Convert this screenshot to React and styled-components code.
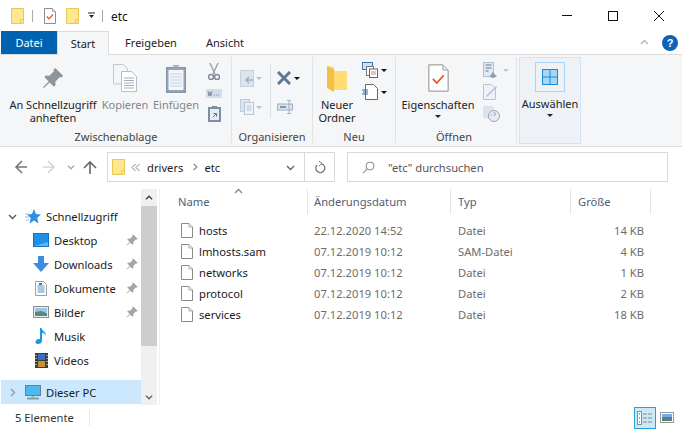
import React from "react";
import styled, { createGlobalStyle } from "styled-components";

const Global = createGlobalStyle`
  html, body { margin: 0; padding: 0; background: #fff; }
  body { font-family: "Noto Sans", "Open Sans", sans-serif; font-size: 11.2px; color: #1a1a1a; }
  * { box-sizing: border-box; }
`;
const Window = styled.div`width: 682px; height: 430px; overflow: hidden; display: flex; flex-direction: column; background: #fff;`;
const TitleBar = styled.div`height: 31px; display: flex; align-items: center; padding-left: 11px; flex: none;`;
const TitleText = styled.span`font-size: 12px; margin-left: 1px; color: #111; position: relative; top: 1px;`;
const QuickSep = styled.span`width: 1px; height: 12px; background: #a8a8a8; margin: 0 ${p => p.$mr || 10}px 0 ${p => p.$ml || 10}px;`;
const WinButtons = styled.div`margin-left: auto; display: flex; height: 31px;`;
const WinButton = styled.div`width: 46px; height: 31px; display: flex; align-items: center; justify-content: center;`;
const QuickIcon = styled.span`display: flex; margin-right: ${p => p.$mr || 0}px;`;
const CaretGlyph = styled.svg`flex: none;`;

const TabsRow = styled.div`height: 24px; display: flex; align-items: stretch; padding-left: 1px; flex: none; position: relative;`;
const FileTab = styled.div`width: 56px; height: 23px; background: #0063b1; color: #fff; display: flex; align-items: center; justify-content: center; font-size: 11px;`;
const Tab = styled.div`width: ${p => p.$w}px; height: ${p => p.$active ? 24 : 23}px; display: flex; align-items: center; justify-content: center; font-size: 11px; color: #222;
  background: ${p => p.$active ? "#f5f6f7" : "transparent"};
  border: ${p => p.$active ? "1px solid #dadbdc" : "none"}; border-bottom: none; position: relative; z-index: 1;`;
const RibbonRight = styled.div`margin-left: auto; display: flex; align-items: center; gap: 13px; padding-right: 4px; height: 23px;`;

const Ribbon = styled.div`height: 93px; flex: none; background: #f5f6f7; border-top: 1px solid #dadbdc; border-bottom: 1px solid #dadbdc; display: flex; padding: 2px 0 1px 1px; margin-top: -1px;`;
const Group = styled.div`width: ${p => p.$w}px; border-right: 1px solid #e1e3e6; display: flex; flex-direction: column; margin-bottom: 2px; flex: none;`;
const GroupBody = styled.div`flex: 1; display: flex; align-items: flex-start; padding-left: ${p => p.$pl || 0}px; min-height: 0;`;
const GroupLabel = styled.div`height: 17px; text-align: center; font-size: 11px; line-height: 21px; color: #444; padding-right: ${p => p.$pr || 0}px;`;
const BigButton = styled.div`width: ${p => p.$w}px; display: flex; flex-direction: column; align-items: center; flex: none; padding-top: 1px; color: ${p => p.$disabled ? "#80868c" : "#222"}; font-size: 11px; line-height: 13px; text-align: center;`;
const BigIcon = styled.div`height: 40px; display: flex; align-items: center; justify-content: center; flex: none;`;
const Caret = styled.span`display: block; width: 0; height: 0; border-left: 3px solid transparent; border-right: 3px solid transparent; border-top: 3px solid ${p => p.$c || "#222"}; margin-top: ${p => p.$mt ?? 0}px; margin-left: ${p => p.$ml ?? 0}px;`;
const SmallCol = styled.div`width: ${p => p.$w}px; display: flex; flex-direction: column; gap: ${p => p.$gap ?? 4}px; padding-top: ${p => p.$pt ?? 3}px; padding-left: ${p => p.$pl ?? 0}px; align-items: ${p => p.$align || "center"}; flex: none;`;
const SmallRow = styled.div`display: flex; align-items: center; height: ${p => p.$h || 20}px;`;
const VSep = styled.div`width: 1px; height: 54px; background: #dfe1e4; margin: 7px 6px 0 6px; flex: none;`;
const SelectPanel = styled.div`width: 62px; height: 87px; margin-left: 2px; background: #eef2f7; border: 1px solid #cde4f9; display: flex; flex-direction: column; align-items: center; padding-top: 4px; font-size: 11px; line-height: 13px; color: #222; flex: none;`;
const SelectIconBox = styled.div`width: 30px; height: 30px; border: 1px solid #a9d4f8; display: flex; align-items: center; justify-content: center; margin-bottom: 5px;`;

const NavBar = styled.div`height: 42px; flex: none; display: flex; align-items: flex-start; padding: 5px 14px 0 0; position: relative;`;
const NavIcons = styled.div`width: 107px; height: 30px; display: flex; align-items: center; padding-left: 13px; flex: none;`;
const NavGap = styled.span`width: ${p => p.$w}px; flex: none;`;
const AddressBox = styled.div`width: 228px; height: 30px; border: 1px solid #d9d9d9; display: flex; align-items: center; flex: none;`;
const Crumbs = styled.div`flex: 1; display: flex; align-items: center; padding-left: 4px; font-size: 11.2px; color: #222;`;
const CrumbSep = styled.span`display: flex; margin: ${p => p.$m};`;
const DropChevron = styled.span`display: flex; margin-right: 9px;`;
const RefreshBox = styled.div`width: 30px; height: 28px; border-left: 1px solid #d9d9d9; display: flex; align-items: center; justify-content: center;`;
const SearchBox = styled.div`width: 321px; height: 30px; margin-left: 12px; border: 1px solid #d9d9d9; display: flex; align-items: center; padding-left: 14px; font-size: 11.2px; color: #555;`;
const SearchText = styled.span`margin-left: 13px;`;

const Content = styled.div`flex: 1; display: flex; min-height: 0;`;
const Sidebar = styled.div`width: 141px; padding-top: 15px; padding-left: 1px; flex: none;`;
const NavRow = styled.div`height: 24px; display: flex; align-items: center; font-size: 11.2px; color: #1a1a1a; margin-bottom: ${p => p.$mb || 0}px;
  background: ${p => p.$selected ? "#cce8ff" : "transparent"}; padding-left: ${p => p.$indent}px; width: 140px; position: relative;`;
const NavChevron = styled.span`width: 17px; display: flex; justify-content: center; flex: none; margin-right: 4px;`;
const NavIconBox = styled.span`width: 16px; height: 16px; display: flex; align-items: center; justify-content: center; margin-right: 5px; flex: none;`;
const PinSlot = styled.span`position: absolute; left: 125px; top: 6px; display: flex;`;
const Scrollbar = styled.div`width: 16px; flex: none; background: #f0f0f0; display: flex; flex-direction: column;`;
const ScrollBtn = styled.div`height: 17px; display: flex; align-items: center; justify-content: center; flex: none;`;
const Thumb = styled.div`height: 140px; background: #cdcdcd; flex: none;`;
const ScrollTrack = styled.div`flex: 1;`;
const PaneDivider = styled.div`width: 1px; background: #f0f0f0; margin-left: 2px; flex: none;`;

const FilePane = styled.div`flex: 1; min-width: 0; position: relative;`;
const Head = styled.div`display: grid; grid-template-columns: 148px 143px 120px 80px; height: 25px; color: #4c607a; font-size: 11.2px; margin-bottom: 6px;`;
const HeadCell = styled.div`border-right: 1px solid #e5e5e5; padding-left: ${p => p.$pl}px; display: flex; align-items: center; height: 25px;`;
const SortArrow = styled.span`position: absolute; left: 74px; top: -2px; display: flex;`;
const FileRow = styled.div`display: grid; grid-template-columns: 133px 144px 114px 72px; height: 21px; align-items: center; font-size: 11.2px; color: #6d6d6d; padding-left: 21px;`;
const FileName = styled.div`display: flex; align-items: center; gap: 6px; color: #1a1a1a;`;
const SizeCell = styled.div`text-align: right;`;

const StatusBar = styled.div`height: 25px; flex: none; display: flex; align-items: center; padding-left: 15px; font-size: 11.2px; color: #333; position: relative;`;
const StatusSep = styled.span`width: 1px; height: 16px; background: #e8e8e8; margin-left: 15px;`;
const ViewButtons = styled.div`margin-left: auto; display: flex; align-items: center; padding-right: 8px; gap: 4px;`;
const DetailsBtn = styled.div`width: 22px; height: 22px; border: 1px solid #26a0da; background: #cbe8f6; display: flex; align-items: center; justify-content: center;`;

const Folder = ({ w = 13, h = 16 }) => (
  <svg width={w} height={h} viewBox="0 0 13 16">
    <path d="M.5.5h12v15H.5z" fill="#ffe78f" stroke="#e8c856" />
    <path d="M9.5 15.5v-4h3" fill="#ffe78f" stroke="#e8c856" />
  </svg>
);
const CheckDoc = ({ s = 1 }) => (
  <svg width={12 * s} height={16 * s} viewBox="0 0 12 16">
    <path d="M.5.5h8l3 3v12H.5z" fill="#fff" stroke="#8c8c8c" strokeWidth={1 / s} />
    <path d="M8.5.5v3h3" fill="#e8e8e8" stroke="#a8a8a8" strokeWidth={1 / s} />
    <path d="M2.8 8.5l2.2 2.4 4-4.4" fill="none" stroke="#e8571f" strokeWidth={s > 1 ? 1 : 1.3} />
  </svg>
);
const Pin = ({ s = 12, c = "#98a0a8" }) => (
  <svg width={s} height={s} viewBox="0 0 24 24">
    <path d="M14.5 1L23 9.5l-2 2-1.5-.5-5 5 .3 3.7-1.8 1.8-4.7-4.7L2 23l-1-1 6.2-6.3-4.7-4.7 1.8-1.8 3.700.3 5-5L12.500 3z" fill={c} />
  </svg>
);
const FileIcon = () => (
  <svg width="12" height="15" viewBox="0 0 12 15">
    <path d="M.5.5h7.5l3.500 3.500v10.500H.5z" fill="#fff" stroke="#8a8a8a" />
    <path d="M8 .5V4h3.500" fill="#f2f2f2" stroke="#a8a8a8" />
  </svg>
);
const Chevron = ({ dir = "down", c = "#666", s = 9 }) => {
  const d = { down: "M1 3l3.500 3.500L8 3", up: "M1 6l3.500-3.500L8 6", right: "M3 1l3.500 3.500L3 8", dbl: "M4.500 1L1 4.500 4.500 8M8.500 1L5 4.500 8.500 8" }[dir];
  return <svg width={s} height={s} viewBox="0 0 9 9"><path d={d} fill="none" stroke={c} strokeWidth={dir === "dbl" ? 1 : 1.4} /></svg>;
};
const Arrow = ({ dir, c }) => {
  const d = { left: "M14 8H3M9 2L3 8l6 6", right: "M2 8h11M7 2l6 6-6 6", up: "M8 15V3M2 9l6-6 6 6" };
  return <svg width="16" height="16" viewBox="0 0 16 16"><path d={d[dir]} fill="none" stroke={c} strokeWidth="1.6" /></svg>;
};

const files = [
  ["hosts", "22.12.2020 14:52", "Datei", "14 KB"],
  ["lmhosts.sam", "07.12.2019 10:12", "SAM-Datei", "4 KB"],
  ["networks", "07.12.2019 10:12", "Datei", "1 KB"],
  ["protocol", "07.12.2019 10:12", "Datei", "2 KB"],
  ["services", "07.12.2019 10:12", "Datei", "18 KB"],
];

const icons = {
  desktop: <svg width="16" height="14" viewBox="0 0 16 14"><rect x=".5" y=".5" width="15" height="13" fill="#1e90e8" stroke="#1470c0" /><path d="M1 13h14V9z" fill="#5cb8f5" /></svg>,
  downloads: <svg width="16" height="16" viewBox="0 0 16 16"><path d="M5 0h6v7h5l-8 9-8-9h5z" fill="#3a8ee0" /></svg>,
  docs: <svg width="12" height="15" viewBox="0 0 12 15"><path d="M.5.5h8l3 3v11H.5z" fill="#fff" stroke="#9aa0a6" /><path d="M2.500 5h7M2.500 7h7M2.500 9h7M2.500 11h7" stroke="#5a8fb8" /><path d="M4 3h3" stroke="#2c7fc4" strokeWidth="2" /></svg>,
  pics: <svg width="16" height="12" viewBox="0 0 16 12"><rect x=".5" y=".5" width="15" height="11" fill="#e8eef2" stroke="#8f8f8f" /><rect x="2" y="2" width="12" height="4" fill="#9cc4e8" /><path d="M2 6l6-1 6 2v3H2z" fill="#5a8a78" /></svg>,
  music: <svg width="12" height="16" viewBox="0 0 12 16"><path d="M5 0h1.500c.5 3 4.500 3.500 4.500 7.500-1-2-3-2.500-4-2.500v8c0 2-2 3-4 3s-2.500-1-2.500-2 1-3 3-3c.5 0 1 .1 1.500.3z" fill="#1e96e8" /></svg>,
  videos: <svg width="13" height="15" viewBox="0 0 13 15"><rect width="13" height="15" fill="#3c3c3c" /><rect x="3" y="1" width="7" height="6" fill="#3a6fc0" /><rect x="3" y="8" width="7" height="6" fill="#c89030" /><path d="M1 2v1M1 5v1M1 8v1M1 11v1M12 2v1M12 5v1M12 8v1M12 11v1" stroke="#fff" /></svg>,
  pc: <svg width="16" height="15" viewBox="0 0 16 15"><rect x=".5" y=".5" width="15" height="10" fill="#4db8f0" stroke="#6a7f90" /><path d="M2 13.500h12" stroke="#8a99a5" strokeWidth="2" /><path d="M6.500 11h3v2h-3z" fill="#a8b4bd" /></svg>,
  star: <svg width="16" height="15" viewBox="0 0 16 15"><path d="M9 0l2 5 5 .5-3.800 3.500L13.500 14.500 9 11.500 4.500 14.500 5.800 9 2 5.500l5-.5z" fill="#2f8fe6" /><path d="M0 5h4M0 8h4M1 11h3" stroke="#8cc4f0" /></svg>,
};

const MoveIcon = () => <svg width="14" height="17" viewBox="0 0 14 17"><rect x=".5" y=".5" width="13" height="16" fill="#dbe5f0" stroke="#c6d1de" /><path d="M13 10H6M9 7l-3 3 3 3" fill="none" stroke="#9fb0c4" strokeWidth="1.500" /></svg>;
const CopyIcon = () => <svg width="14" height="16" viewBox="0 0 14 16"><rect x=".5" y=".5" width="9" height="12" fill="#dbe5f0" stroke="#c0ccd9" /><rect x="4.500" y="3.500" width="9" height="12" fill="#eef3f8" stroke="#b8c5d3" /><path d="M6.500 7h5M6.500 9h5M6.500 11h5" stroke="#b8c5d3" /></svg>;

export default function App() {
  return (
    <Window>
      <Global />
      <TitleBar>
        <QuickIcon><Folder /></QuickIcon>
        <QuickSep $ml={8} $mr={11} />
        <QuickIcon $mr={10}><CheckDoc /></QuickIcon>
        <QuickIcon $mr={8}><Folder /></QuickIcon>
        <CaretGlyph width="9" height="7" viewBox="0 0 9 7"><path d="M1 1h7" stroke="#222" /><path d="M2 3h5L4.500 6z" fill="#222" /></CaretGlyph>
        <QuickSep $ml={6} $mr={7} />
        <TitleText>etc</TitleText>
        <WinButtons>
          <WinButton><svg width="10" height="1"><rect width="10" height="1" fill="#111" /></svg></WinButton>
          <WinButton><svg width="10" height="10"><rect x=".5" y=".5" width="9" height="9" fill="none" stroke="#111" /></svg></WinButton>
          <WinButton><svg width="10" height="10"><path d="M0 0l10 10M10 0L0 10" stroke="#111" /></svg></WinButton>
        </WinButtons>
      </TitleBar>
      <TabsRow>
        <FileTab>Datei</FileTab>
        <Tab $w={52} $active>Start</Tab>
        <Tab $w={84}>Freigeben</Tab>
        <Tab $w={64}>Ansicht</Tab>
        <RibbonRight>
          <Chevron dir="up" c="#b5b5b5" />
          <svg width="16" height="16" viewBox="0 0 16 16"><circle cx="8" cy="8" r="8" fill="#0b62b8" /><text x="8" y="12" textAnchor="middle" fontSize="11" fontWeight="700" fill="#fff" fontFamily="Liberation Sans">?</text></svg>
        </RibbonRight>
      </TabsRow>
      <Ribbon>
        <Group $w={231}>
          <GroupBody $pl={4}>
            <BigButton $w={96}>
              <BigIcon><Pin s={22} c="#8d949b" /></BigIcon>
              An Schnellzugriff<br />anheften
            </BigButton>
            <BigButton $w={48} $disabled>
              <BigIcon><svg width="24" height="28" viewBox="0 0 24 28"><path d="M.5.5h10l4 4V20H.5z" fill="#f3f5f8" stroke="#c0c8d2" /><path d="M8.500 7.500h10l5 5v15h-15z" fill="#fff" stroke="#b5bec9" /><path d="M11 14h10M11 16.500h10M11 19h10M11 21.500h10M11 24h10" stroke="#9fb0c4" /></svg></BigIcon>
              Kopieren
            </BigButton>
            <BigButton $w={54} $disabled>
              <BigIcon><svg width="20" height="29" viewBox="0 0 20 29"><rect x=".5" y="3.500" width="19" height="25" fill="#94a3b8" stroke="#8795a8" /><rect x="2.500" y="6" width="15" height="20" fill="#f4f6fa" /><path d="M4 10h12M4 13h12M4 16h12M4 19h12M4 22h12" stroke="#c8d2de" /><path d="M7 3.500V1h6v2.500z" fill="#aab4c2" /></svg></BigIcon>
              Einfügen
            </BigButton>
            <SmallCol $w={22} $gap={5} $pt={3}>
              <SmallRow $h={22}><svg width="12" height="17" viewBox="0 0 12 17"><path d="M2 0l5 11M10 0L5 11" stroke="#9aa2ab" strokeWidth="1.400" /><circle cx="3" cy="14" r="2.500" fill="none" stroke="#7f8a98" strokeWidth="1.500" /><circle cx="9" cy="14" r="2.500" fill="none" stroke="#7f8a98" strokeWidth="1.500" /></svg></SmallRow>
              <SmallRow $h={12}><svg width="16" height="9" viewBox="0 0 16 9"><rect width="16" height="9" fill="#d4deea" /><path d="M2 2l1 5 1-4 1 4 1-5M8 6h1M10 6h1M12 6h1" stroke="#6f8197" fill="none" strokeWidth=".8" /></svg></SmallRow>
              <SmallRow $h={20}><svg width="13" height="16" viewBox="0 0 13 16"><rect y="1" width="13" height="15" fill="#7e8da1" /><rect x="2" y="3" width="9" height="11" fill="#e9edf3" /><path d="M4 1V0h5v1z" fill="#7e8da1" /><path d="M5 11l3-3M5.500 7.500H8.500V10.500" stroke="#5f7085" fill="none" /></svg></SmallRow>
            </SmallCol>
          </GroupBody>
          <GroupLabel>Zwischenablage</GroupLabel>
        </Group>
        <Group $w={81}>
          <GroupBody $pl={8}>
            <SmallCol $w={24} $align="flex-start" $gap={9} $pt={11}>
              <SmallRow><MoveIcon /><Caret $c="#b8c0c8" $ml={2} /></SmallRow>
              <SmallRow><CopyIcon /><Caret $c="#b8c0c8" $ml={2} /></SmallRow>
            </SmallCol>
            <VSep />
            <SmallCol $w={26} $align="flex-start" $gap={9} $pt={11}>
              <SmallRow><svg width="14" height="14" viewBox="0 0 14 14"><path d="M1 1l12 12M13 1L1 13" stroke="#5f7a96" strokeWidth="3" /></svg><Caret $ml={3} $c="#111" /></SmallRow>
              <SmallRow><svg width="17" height="14" viewBox="0 0 17 14"><rect x="0.500" y="4" width="15" height="6" fill="#dbe4ee" stroke="#9fb0c2" /><path d="M12 1v12M10 .5h4M10 13.500h4" stroke="#9fb0c2" /><rect x="3" y="6" width="6" height="2" fill="#7f95ab" /></svg></SmallRow>
            </SmallCol>
          </GroupBody>
          <GroupLabel>Organisieren</GroupLabel>
        </Group>
        <Group $w={83}>
          <GroupBody>
            <BigButton $w={48}>
              <BigIcon><svg width="20" height="28" viewBox="0 0 20 28"><path d="M0 2l7 1v4h13v19H7l-7-2z" fill="#ffdc73" /><path d="M0 2l7 3v23l-7-4z" fill="#f3c043" /></svg></BigIcon>
              Neuer<br />Ordner
            </BigButton>
            <SmallCol $w={30} $gap={0} $pt={2} $align="flex-start" $pl={1}>
              <SmallRow $h={22}><svg width="16" height="16" viewBox="0 0 16 16"><rect x=".5" y=".5" width="10" height="7" fill="#cde3f5" stroke="#3c78b0" /><rect x="4.500" y="4.500" width="7" height="9" fill="#fff" stroke="#777" /><rect x="7.500" y="7" width="8" height="8.500" fill="#fff" stroke="#666" /><path d="M9 10h5M9 12h5" stroke="#c88" /></svg><Caret $c="#111" $ml={3} /></SmallRow>
              <SmallRow $h={22}><svg width="16" height="16" viewBox="0 0 16 16"><path d="M3.500.500h8l4 4v11h-12z" fill="#fff" stroke="#666" /><path d="M0 6h6M1 8h5M0 10h6" stroke="#2d6da3" /></svg><Caret $c="#111" $ml={3} /></SmallRow>
            </SmallCol>
          </GroupBody>
          <GroupLabel>Neu</GroupLabel>
        </Group>
        <Group $w={121}>
          <GroupBody>
            <BigButton $w={84}>
              <BigIcon><CheckDoc s={1.75} /></BigIcon>
              Eigenschaften
              <Caret $mt={4} />
            </BigButton>
            <SmallCol $w={32} $gap={0} $pt={2} $align="flex-start" $pl={3}>
              <SmallRow $h={22}><svg width="15" height="16" viewBox="0 0 15 16"><rect x=".5" y=".5" width="10" height="14" fill="#e3eaf2" stroke="#b4c0cd" /><path d="M2.500 3h6M2.500 6h6M2.500 9h3" stroke="#8ea0b4" strokeWidth="1.500" /><path d="M6 15l4-5 4 5h-2.500v1h-3v-1z" fill="#8ea0b4" /></svg><Caret $c="#c0c6cc" $ml={5} /></SmallRow>
              <SmallRow $h={22}><svg width="14" height="16" viewBox="0 0 14 16"><path d="M.5.500h8l4 4v11h-12z" fill="#eef2f7" stroke="#b9c5d2" /><path d="M3 12L13 2l1 1L4 13z" fill="#a9c2de" /></svg></SmallRow>
              <SmallRow $h={22}><svg width="17" height="16" viewBox="0 0 17 16"><rect width="11" height="12" fill="#dbe3ec" /><circle cx="11" cy="10" r="5.500" fill="#e8edf3" stroke="#97a4b4" /><path d="M11 10l2-3M8 9h1M11 6v1" stroke="#8494a6" fill="none" /></svg></SmallRow>
            </SmallCol>
          </GroupBody>
          <GroupLabel $pr={4}>Öffnen</GroupLabel>
        </Group>
        <SelectPanel>
          <SelectIconBox><svg width="16" height="16" viewBox="0 0 16 16"><rect width="16" height="16" fill="#1b8ad6" /><rect x="1" y="1" width="6.500" height="6.500" fill="#a6d7f7" /><rect x="8.500" y="1" width="6.500" height="6.500" fill="#a6d7f7" /><rect x="1" y="8.500" width="6.500" height="6.500" fill="#a6d7f7" /><rect x="8.500" y="8.500" width="6.500" height="6.500" fill="#a6d7f7" /></svg></SelectIconBox>
          Auswählen
          <Caret $mt={4} />
        </SelectPanel>
      </Ribbon>
      <NavBar>
        <NavIcons>
          <Arrow dir="left" c="#777" />
          <NavGap $w={12} />
          <Arrow dir="right" c="#d5d5d5" />
          <NavGap $w={10} />
          <Chevron dir="down" c="#a0a0a0" s={8} />
          <NavGap $w={7} />
          <Arrow dir="up" c="#666" />
        </NavIcons>
        <AddressBox>
          <Crumbs>
            <Folder />
            <CrumbSep $m="0 7px 0 6px"><Chevron dir="dbl" c="#888" /></CrumbSep>
            drivers
            <CrumbSep $m="0 5px 0 8px"><Chevron dir="right" c="#888" s={8} /></CrumbSep>
            etc
          </Crumbs>
          <DropChevron><Chevron dir="down" c="#666" /></DropChevron>
          <RefreshBox>
            <svg width="12" height="13" viewBox="0 0 12 13"><path d="M7 2.600A4.500 4.500 0 1 1 3 4" fill="none" stroke="#777" strokeWidth="1.300" /><path d="M5 0l3 2.600L5 5" fill="none" stroke="#777" /></svg>
          </RefreshBox>
        </AddressBox>
        <SearchBox>
          <svg width="13" height="13" viewBox="0 0 13 13"><circle cx="8" cy="5" r="4" fill="none" stroke="#888" /><path d="M5 8L1 12" stroke="#b89a7a" strokeWidth="1.200" /></svg>
          <SearchText>"etc" durchsuchen</SearchText>
        </SearchBox>
      </NavBar>
      <Content>
        <Sidebar>
          <NavRow $indent={3}>
            <NavChevron><Chevron dir="down" c="#555" /></NavChevron>
            <NavIconBox>{icons.star}</NavIconBox>Schnellzugriff
          </NavRow>
          {[["desktop", "Desktop", 1], ["downloads", "Downloads", 1], ["docs", "Dokumente", 1], ["pics", "Bilder", 1], ["music", "Musik", 0], ["videos", "Videos", 0]].map(([k, t, pin]) => (
            <NavRow key={k} $indent={32} $mb={k === "videos" ? 8 : 0}>
              <NavIconBox>{icons[k]}</NavIconBox>{t}
              {pin ? <PinSlot><Pin s={12} c="#a0a6ad" /></PinSlot> : null}
            </NavRow>
          ))}
          <NavRow $selected $indent={3}>
            <NavChevron><Chevron dir="right" c="#999" /></NavChevron>
            <NavIconBox>{icons.pc}</NavIconBox>Dieser PC
          </NavRow>
        </Sidebar>
        <Scrollbar>
          <ScrollBtn><Chevron dir="up" c="#333" s={8} /></ScrollBtn>
          <Thumb />
          <ScrollTrack />
          <ScrollBtn><Chevron dir="down" c="#555" s={8} /></ScrollBtn>
        </Scrollbar>
        <PaneDivider />
        <FilePane>
          <SortArrow><Chevron dir="up" c="#888" /></SortArrow>
          <Head>
            <HeadCell $pl={18}>Name</HeadCell>
            <HeadCell $pl={6}>Änderungsdatum</HeadCell>
            <HeadCell $pl={7}>Typ</HeadCell>
            <HeadCell $pl={7}>Größe</HeadCell>
          </Head>
          {files.map(f => (
            <FileRow key={f[0]}>
              <FileName><FileIcon />{f[0]}</FileName>
              <div>{f[1]}</div>
              <div>{f[2]}</div>
              <SizeCell>{f[3]}</SizeCell>
            </FileRow>
          ))}
        </FilePane>
      </Content>
      <StatusBar>
        5 Elemente<StatusSep />
        <ViewButtons>
          <DetailsBtn><svg width="16" height="14" viewBox="0 0 16 14"><rect x=".5" y=".5" width="4" height="13" fill="#fff" stroke="#8a8a8a" /><path d="M2 3h1M2 7h1M2 11h1" stroke="#444" /><path d="M6 3h4M11 3h4M6 7h4M11 7h4M6 11h4M11 11h4" stroke="#888" /></svg></DetailsBtn>
          <svg width="14" height="11" viewBox="0 0 14 11"><rect x=".5" y=".5" width="13" height="10" fill="#fff" stroke="#9a9a9a" /><rect x="2" y="2" width="10" height="3" fill="#6eaef0" /><path d="M2 5h10v4H2z" fill="#5f8078" /></svg>
        </ViewButtons>
      </StatusBar>
    </Window>
  );
}
